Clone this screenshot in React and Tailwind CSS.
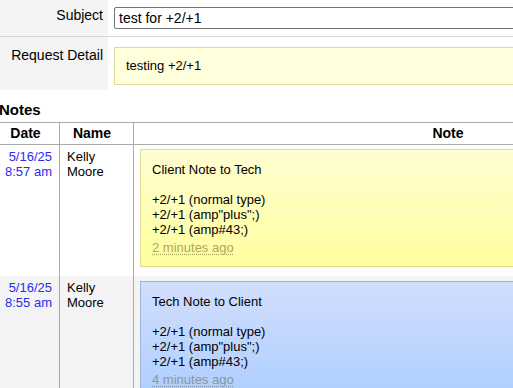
import React from 'react';

const notes = [
  {
    date: '5/16/25',
    time: '8:57 am',
    name: ['Kelly', 'Moore'],
    title: 'Client Note to Tech',
    ago: '2 minutes ago',
    kind: 'client',
  },
  {
    date: '5/16/25',
    time: '8:55 am',
    name: ['Kelly', 'Moore'],
    title: 'Tech Note to Client',
    ago: '4 minutes ago',
    kind: 'tech',
  },
];

const lines = ['+2/+1 (normal type)', '+2/+1 (amp"plus";)', '+2/+1 (amp#43;)'];

const NoteBox = ({ note }) => {
  const isClient = note.kind === 'client';
  return (
    <div
      className={
        isClient
          ? 'mt-[4px] border border-[#dcdb96] bg-gradient-to-b from-[#fffdd2] to-[#ffff9c] pt-[12px] pb-[11px] px-[11px]'
          : 'mt-[5px] border border-[#9fb3d6] bg-gradient-to-b from-[#d2defd] to-[#adcfff] pt-[12px] pb-[11px] px-[11px]'
      }
    >
      <div className="leading-[15px]">{note.title}</div>
      <div className="leading-[15px]">&nbsp;</div>
      {lines.map(l => (
        <div key={l} className="leading-[15px]">{l}</div>
      ))}
      <div className="mt-[3px] leading-[15px]">
        <span
          className={
            isClient
              ? 'text-[#aea65c] underline decoration-dotted underline-offset-2'
              : 'text-[#8a95a6] underline decoration-dotted underline-offset-2'
          }
        >
          {note.ago}
        </span>
      </div>
    </div>
  );
};

const App = () => {
  return (
    <div className="w-[513px] h-[388px] overflow-hidden bg-white text-black font-['Liberation_Sans',Arial,sans-serif]">
      <div className="w-[780px]">
        {/* request form */}
        <div className="flex border-b border-[#d8d8d8] text-[14px]">
          <div className="w-[108px] shrink-0 bg-[#f4f4f4] pt-[7px] pr-[5px] text-right leading-[16px]">Subject</div>
          <div className="flex-1 pl-[6px] py-[7px]">
            <div className="h-[22px] border border-[#767676] rounded-[2px] px-[4px] leading-[20px]">test for +2/+1</div>
          </div>
        </div>
        <div className="flex text-[14px]">
          <div className="w-[108px] shrink-0 bg-[#f4f4f4] pt-[10px] pr-[5px] text-right leading-[16px] h-[53px]">Request Detail</div>
          <div className="flex-1 pl-[6px] pt-[10px]">
            <div className="h-[38px] border border-[#dedb9e] bg-[#ffffdc] px-[11px] text-[13px] leading-[36px]">testing +2/+1</div>
          </div>
        </div>

        {/* notes */}
        <h3 className="mt-[11px] mb-[3px] -ml-[1px] text-[15px] font-bold leading-[18px]">Notes</h3>
        <div className="w-[762px] border-t border-[#aaaaaa] text-[13px]">
          <div className="grid grid-cols-[60px_74px_1fr] border-b border-[#aaaaaa] text-[14px] font-bold leading-[21px]">
            <div className="border-r border-[#aaaaaa] pr-[8px] text-center">Date</div>
            <div className="border-r border-[#aaaaaa] pr-[9px] text-center">Name</div>
            <div className="text-center">Note</div>
          </div>
          {notes.map((n, i) => (
            <div
              key={i}
              className={i % 2 === 1 ? 'grid grid-cols-[60px_74px_1fr] bg-[#f4f4f4]' : 'grid grid-cols-[60px_74px_1fr] bg-white'}
            >
              <div className="border-r border-[#aaaaaa] pt-[4px] pr-[7px] text-right text-[#2b2bf2] leading-[15px]">
                <div>{n.date}</div>
                <div>{n.time}</div>
              </div>
              <div className="border-r border-[#aaaaaa] pt-[4px] pl-[7px] leading-[15px]">
                <div>{n.name[0]}</div>
                <div>{n.name[1]}</div>
              </div>
              <div className="pl-[6px] pb-[9px]">
                <NoteBox note={n} />
              </div>
            </div>
          ))}
        </div>
      </div>
    </div>
  );
};

export default App;
